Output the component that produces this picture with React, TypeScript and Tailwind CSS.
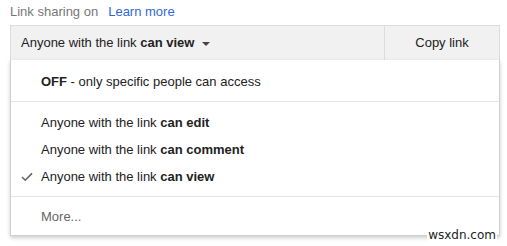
import React from "react";

export default function App() {
  return (
    <div className="w-[507px] h-[246px] bg-white relative" style={{ fontFamily: '"Liberation Sans", Arial, sans-serif' }}>
      <div className="pt-[4px] pl-[10px] h-[25px] text-[13px] leading-[16px] flex gap-[10px]">
        <span className="text-[#777]">Link sharing on</span>
        <span className="text-[#3367d6]">Learn more</span>
      </div>
      <div className="ml-[10px] w-[490px] h-[36px] flex bg-[#f1f1f1] border border-[#dcdcdc] text-[13px] text-[#222]">
        <div className="flex-1 flex items-center pl-[10px]">
          <span>Anyone with the link <b>can view</b></span>
          <svg width="8" height="4" viewBox="0 0 8 4" className="ml-[8px] mt-[1px]">
            <path d="M0 0 L8 0 L4 4 Z" fill="#444" />
          </svg>
        </div>
        <div className="w-[115px] border-l border-[#dcdcdc] flex items-center justify-center">Copy link</div>
      </div>
      <div className="absolute left-[10px] top-[60px] w-[490px] h-[176px] bg-white border border-[#cfcfcf] border-t-0 shadow-[0_2px_4px_rgba(0,0,0,0.2)]">
        <div className="h-[42px] pt-[3px] flex items-center pl-[30px] text-[13px] text-[#222] border-b border-[#e5e5e5]">
          <span><b>OFF</b> - only specific people can access</span>
        </div>
        <div className="pt-[7px] pb-[6px] border-b border-[#e5e5e5]">
          <div className="h-[27px] flex items-center pl-[30px] text-[13px] text-[#222]">
            <span>Anyone with the link <b>can edit</b></span>
          </div>
          <div className="h-[27px] flex items-center pl-[30px] text-[13px] text-[#222]">
            <span>Anyone with the link <b>can comment</b></span>
          </div>
          <div className="h-[27px] flex items-center pl-[30px] text-[13px] text-[#222] relative">
            <svg width="12" height="10" viewBox="0 0 12 10" className="absolute left-[10px] top-[9px]">
              <path d="M1 5 L4.2 8.2 L11 1.4" stroke="#666" strokeWidth="1.6" fill="none" />
            </svg>
            <span>Anyone with the link <b>can view</b></span>
          </div>
        </div>
        <div className="h-[39px] flex items-center pl-[30px] text-[13px] text-[#666]">
          <span>More...</span>
        </div>
      </div>
      <div className="absolute right-[10px] top-[229px] text-[12px] leading-[12px] text-[#222] bg-white px-[1px]" style={{ fontFamily: '"DejaVu Sans", sans-serif' }}>wsxdn.com</div>
    </div>
  );
}
